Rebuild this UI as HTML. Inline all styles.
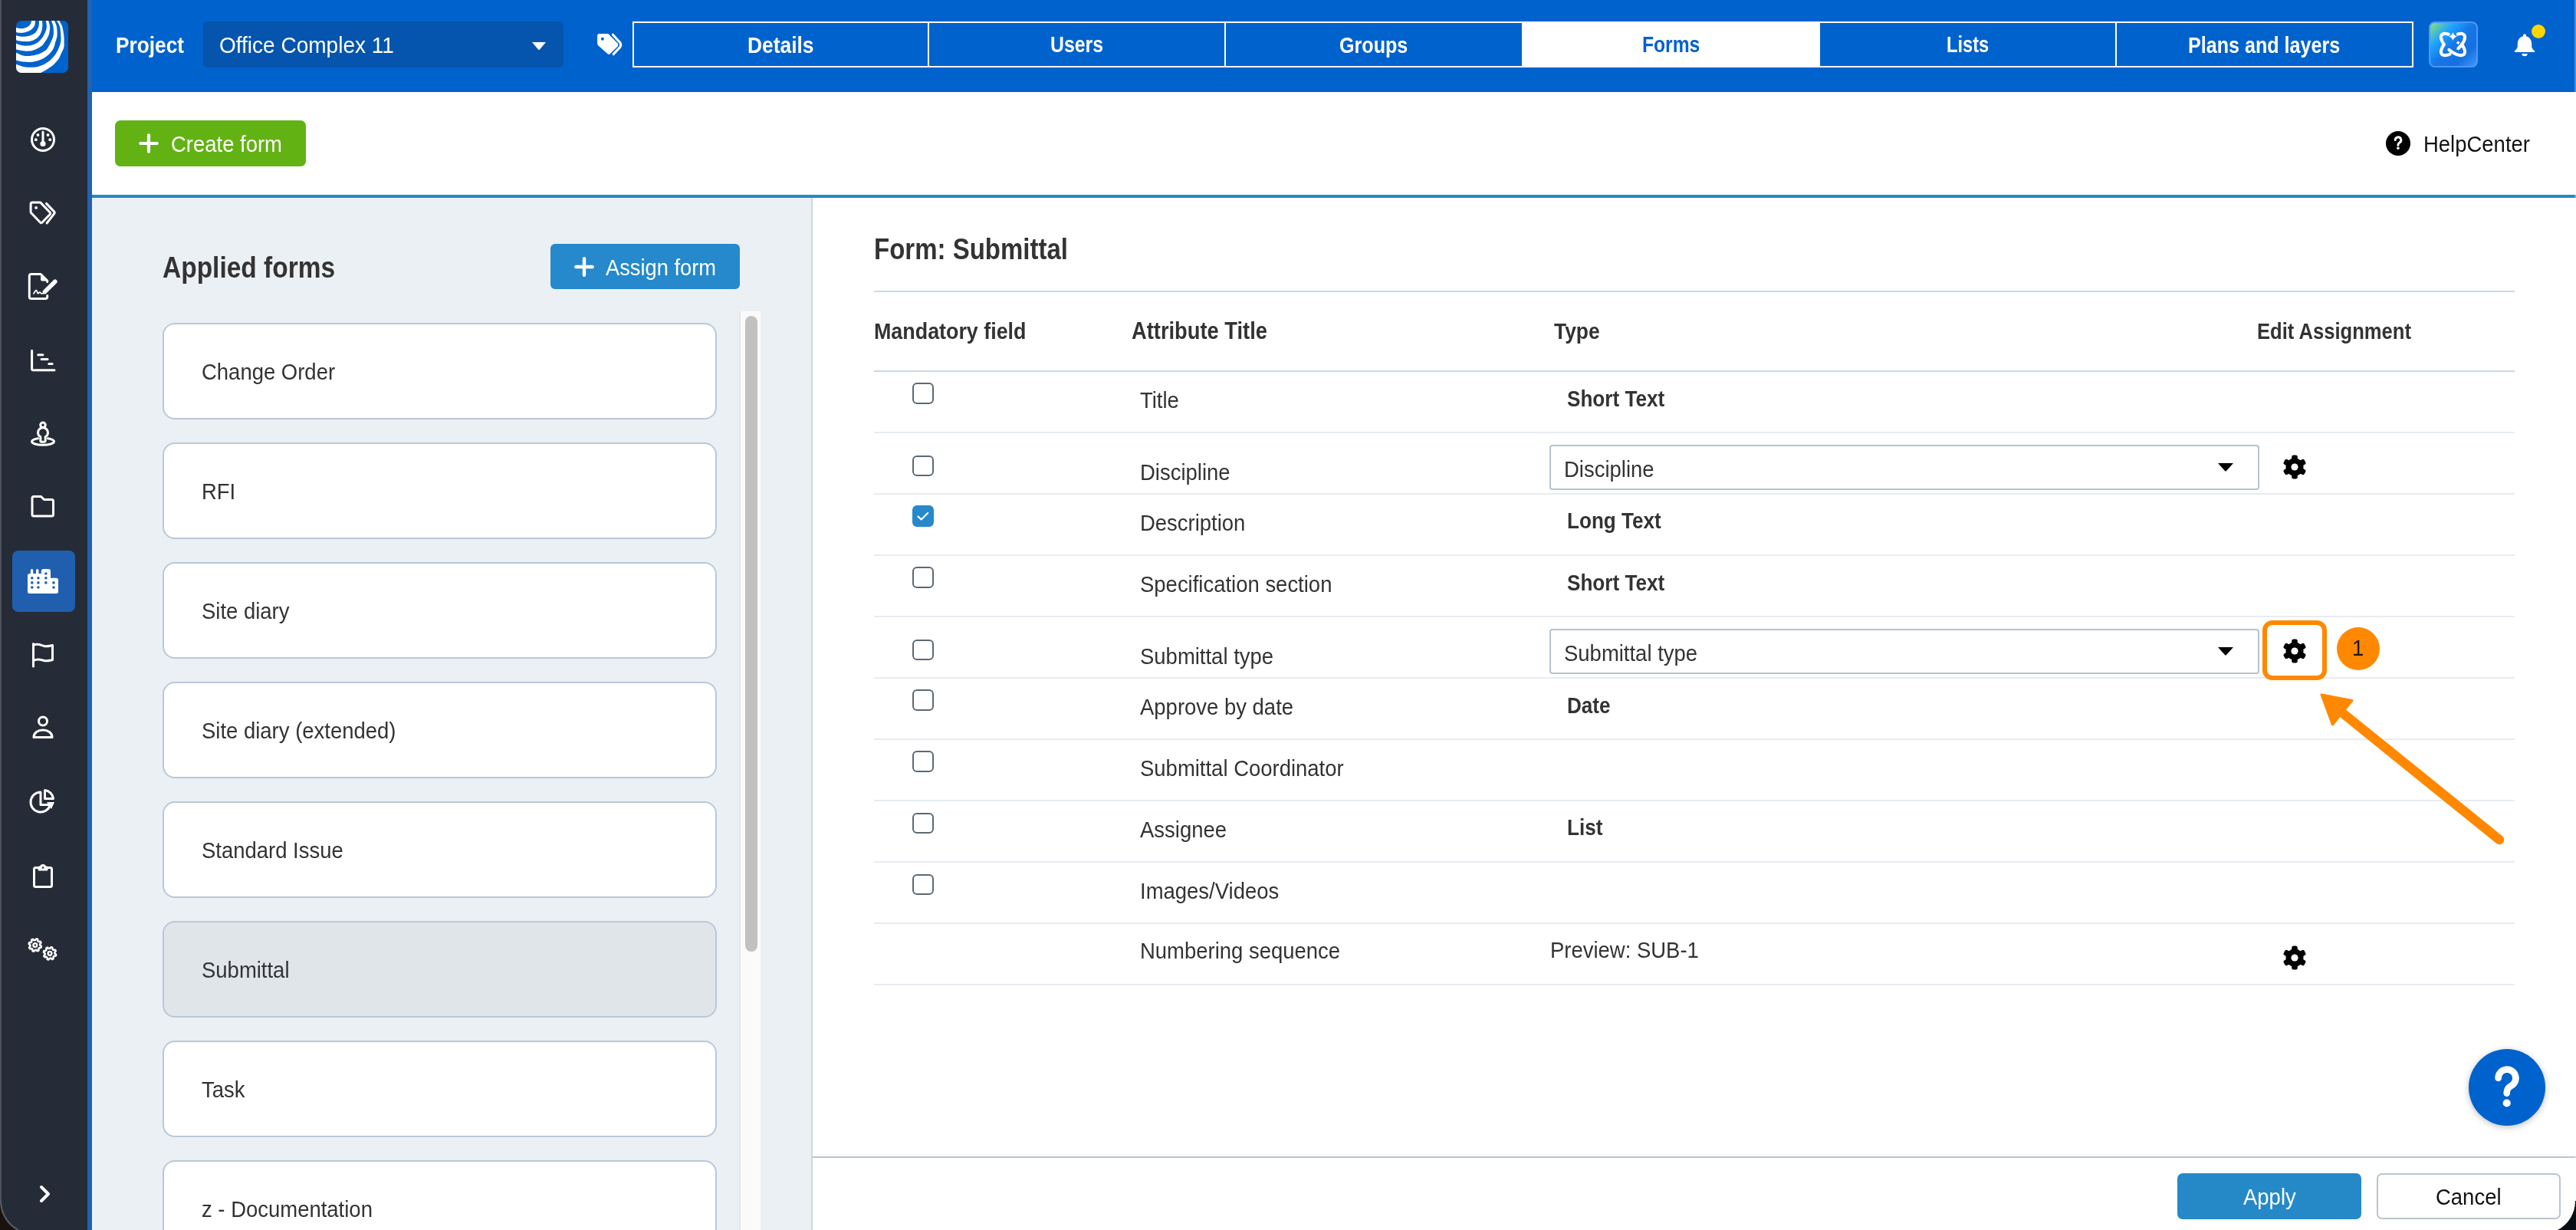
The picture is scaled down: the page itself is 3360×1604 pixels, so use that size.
<!DOCTYPE html>
<html><head><meta charset="utf-8">
<style>
html,body{margin:0;padding:0;}
body{width:3360px;height:1604px;overflow:hidden;position:relative;background:#fff;font-family:"Liberation Sans",sans-serif;}
.t{position:absolute;white-space:nowrap;line-height:1;will-change:transform;}
.b{position:absolute;box-sizing:border-box;}
svg{position:absolute;overflow:visible;}
</style></head><body>
<div class="b" style="left:0px;top:0px;width:114px;height:1604px;background:#262c37"></div>
<div class="b" style="left:0px;top:0px;width:2px;height:1604px;background:#4d525c"></div>
<div class="b" style="left:114px;top:0px;width:6px;height:1604px;background:#2262b0"></div>
<svg style="left:21px;top:27px" width="68" height="68" viewBox="0 0 68 68"><defs><clipPath id="lc"><rect width="68" height="68" rx="7"/></clipPath></defs><g clip-path="url(#lc)"><rect width="68" height="68" fill="#0062cc"/><g fill="#fff"><path d="M24.8 -1 L24.8 0 C24.8 0.8 24.9 3.4 24.5 4.9 C24.1 6.4 23.3 7.8 22.4 9.0 C21.5 10.2 20.3 11.3 18.9 12.2 C17.5 13.1 15.9 13.9 14.2 14.5 C12.5 15.1 10.5 15.6 8.7 15.8 C6.9 16.0 4.8 15.8 3.4 15.7 C1.9 15.6 0.6 15.1 0.0 15.0 L-1 9.1 L0 9.1 C0.4 9.2 1.4 9.6 2.5 9.8 C3.5 10.0 4.9 10.3 6.3 10.3 C7.7 10.3 9.3 10.2 10.7 9.8 C12.1 9.4 13.6 8.8 14.8 8.1 C16.0 7.4 16.9 6.6 17.7 5.7 C18.5 4.8 19.1 3.5 19.5 2.5 C19.9 1.5 19.8 0.4 19.9 0.0 L19.9 -1 Z"/>
<path d="M34.1 -1 L34.1 0 C34.1 1.5 34.5 6.3 34.1 9.2 C33.7 12.0 33.0 14.8 31.8 17.1 C30.6 19.4 28.9 21.4 26.8 23.0 C24.8 24.6 22.1 25.8 19.5 26.5 C16.9 27.2 14.0 27.2 11.3 27.1 C8.6 27.1 5.3 26.5 3.4 26.2 C1.5 25.9 0.6 25.4 0.0 25.3 L-1 19.2 L0 19.2 C0.8 19.4 3.0 20.1 4.9 20.4 C6.8 20.7 9.1 20.9 11.3 20.8 C13.5 20.7 15.9 20.2 18.0 19.5 C20.1 18.8 22.3 17.9 23.9 16.6 C25.5 15.3 26.7 13.6 27.7 11.9 C28.7 10.2 29.3 8.3 29.7 6.3 C30.1 4.3 29.9 1.1 29.9 0.0 L29.9 -1 Z"/>
<path d="M42.1 -1 L42.1 0 C42.4 1.3 43.9 5.0 44.1 7.8 C44.3 10.6 43.7 14.2 43.2 16.6 C42.7 19.0 41.9 20.4 40.9 22.4 C39.9 24.3 38.3 26.6 37.1 28.3 C35.9 30.0 35.5 31.3 33.5 32.8 C31.5 34.3 28.1 36.3 25.3 37.4 C22.5 38.5 19.5 39.3 16.6 39.6 C13.7 39.9 10.6 39.5 7.8 39.1 C5.0 38.7 1.3 37.7 0.0 37.4 L-1 29.7 L0 29.7 C0.8 30.0 2.9 31.0 4.9 31.5 C6.9 32.0 9.5 32.7 12.2 32.7 C14.9 32.8 18.3 32.5 21.0 31.8 C23.7 31.1 26.2 29.8 28.3 28.3 C30.4 26.8 32.2 24.5 33.5 23.0 C34.8 21.5 35.0 21.1 35.9 19.5 C36.8 17.9 37.9 15.5 38.6 13.6 C39.3 11.7 39.9 10.1 39.9 7.8 C39.9 5.5 39.1 1.3 38.9 0.0 L38.9 -1 Z"/>
<path d="M50 -1 L50 0 C50.5 1.3 52.3 4.5 52.9 7.8 C53.5 11.1 53.8 16.1 53.5 19.5 C53.2 22.9 51.8 25.9 51.1 28.3 C50.5 30.7 50.3 32.2 49.6 34.0 C48.9 35.8 48.3 37.1 47.0 38.9 C45.7 40.7 43.6 43.0 41.8 44.7 C39.9 46.4 38.1 47.8 35.9 49.1 C33.6 50.4 31.0 51.5 28.3 52.3 C25.6 53.1 22.7 53.7 19.5 53.9 C16.3 54.1 12.4 53.9 9.2 53.5 C5.9 53.1 1.5 51.8 0.0 51.4 L-1 41.8 L0 41.8 C1.5 42.4 6.2 44.9 9.2 45.6 C12.2 46.3 14.8 46.1 18.0 45.9 C21.2 45.6 25.4 45.0 28.3 44.1 C31.2 43.2 33.6 41.6 35.5 40.5 C37.4 39.4 38.4 38.9 39.7 37.4 C41.0 35.9 42.4 33.5 43.5 31.5 C44.6 29.5 45.6 27.6 46.5 25.3 C47.4 23.1 48.5 20.9 48.8 18.0 C49.1 15.1 49.0 10.8 48.5 7.8 C48.0 4.8 46.4 1.3 46.0 0.0 L46 -1 Z"/>
<path d="M56.1 -1 L56.1 0 C56.8 1.3 59.2 4.5 60.2 7.8 C61.2 11.1 61.9 16.1 62.3 19.5 C62.7 22.9 62.6 25.7 62.6 28.3 C62.6 30.9 62.8 32.8 62.3 35.0 C61.8 37.2 60.5 39.2 59.3 41.8 C58.1 44.4 56.9 47.9 55.0 50.6 C53.1 53.3 50.8 55.7 48.2 57.9 C45.7 60.1 42.2 62.1 39.7 63.7 C37.2 65.3 34.3 66.7 33.0 67.5 C31.7 68.3 32.2 68.3 32.0 68.5 L0 69 L-1 56.7 L0 56.7 C1.8 57.3 7.4 59.5 10.7 60.2 C13.9 60.9 16.6 60.8 19.5 60.8 C22.4 60.8 25.3 60.6 28.3 59.9 C31.3 59.2 34.5 57.9 37.4 56.4 C40.3 54.9 43.1 53.0 45.6 50.6 C48.1 48.2 50.7 45.0 52.6 41.8 C54.5 38.6 56.3 34.4 57.3 31.2 C58.3 28.0 58.5 26.3 58.5 22.4 C58.5 18.5 57.9 11.5 57.0 7.8 C56.1 4.1 53.8 1.3 53.2 0.0 L53.2 -1 Z"/></g></g></svg>
<div class="b" style="left:16px;top:718px;width:82px;height:80px;background:#1f5fae;border-radius:8px"></div>
<svg style="left:36px;top:162px" width="40" height="40" viewBox="0 0 40 40"><circle cx="20" cy="20" r="14.5" fill="none" stroke="#fff" stroke-width="3" stroke-linecap="round" stroke-linejoin="round"/><line x1="20" y1="10" x2="20" y2="24" fill="none" stroke="#fff" stroke-width="3" stroke-linecap="round" stroke-linejoin="round"/><circle cx="20" cy="25.5" r="3.6" fill="#fff"/><circle cx="13.5" cy="14" r="1.9" fill="#fff"/><circle cx="26.5" cy="14" r="1.9" fill="#fff"/><circle cx="10.8" cy="20.2" r="1.9" fill="#fff"/><circle cx="29.2" cy="20.2" r="1.9" fill="#fff"/></svg>
<svg style="left:36px;top:258px" width="40" height="40" viewBox="0 0 40 40"><path d="M4.1 8 a2.1 2.1 0 0 1 2.1-2.1 h10.4 l12.8 13.3 a1.5 1.5 0 0 1 0 2 l-10.6 11 a1.5 1.5 0 0 1 -2.1 0 l-12-12.4 a1.8 1.8 0 0 1 -.6-1.3z" fill="none" stroke="#fff" stroke-width="3" stroke-linecap="round" stroke-linejoin="round"/><circle cx="11.1" cy="12.9" r="1.9" fill="#fff"/><path d="M24.5 7.4 l10 10.5 a2.2 2.2 0 0 1 0 3 l-9.4 12.1" fill="none" stroke="#fff" stroke-width="3" stroke-linecap="round" stroke-linejoin="round"/></svg>
<svg style="left:36px;top:354px" width="40" height="40" viewBox="0 0 40 40"><path d="M25.7 13.5 v-1.5 l-8.5-8.5 h-12.4 a2.5 2.5 0 0 0 -2.5 2.5 v27 a2.5 2.5 0 0 0 2.5 2.5 h18.4 a2.5 2.5 0 0 0 2.5-2.5 v-1.5" fill="none" stroke="#fff" stroke-width="3" stroke-linecap="round" stroke-linejoin="round"/><path d="M17 3.5 v7 a2 2 0 0 0 2 2 h7z" fill="#fff"/><path d="M8 28.8 c1.5-2 2.5-5.5 3.8-3.5 c1 1.7 1.2 4.3 2.6 2.8 c1-1 1.8-1.6 3 .2 c.8 1.1 2 .5 3.5 0" fill="none" stroke="#fff" stroke-width="1.8" stroke-linecap="round" stroke-linejoin="round"/><path d="M22.5 26.5 L35.8 13.2" stroke="#fff" stroke-width="5.6" stroke-linecap="round"/><path d="M19.8 29.6 l1.2-4.2 l3 3z" fill="#fff"/></svg>
<svg style="left:36px;top:450px" width="40" height="40" viewBox="0 0 40 40"><path d="M5.6 7.2 v23.6 a2 2 0 0 0 2 2 h27.4" fill="none" stroke="#fff" stroke-width="3" stroke-linecap="round" stroke-linejoin="round"/><line x1="13.8" y1="12.7" x2="19.9" y2="12.7" fill="none" stroke="#fff" stroke-width="3" stroke-linecap="round" stroke-linejoin="round"/><line x1="18.1" y1="18.4" x2="26" y2="18.4" fill="none" stroke="#fff" stroke-width="3" stroke-linecap="round" stroke-linejoin="round"/><line x1="27.8" y1="24.5" x2="32.1" y2="24.5" fill="none" stroke="#fff" stroke-width="3" stroke-linecap="round" stroke-linejoin="round"/></svg>
<svg style="left:36px;top:546px" width="40" height="40" viewBox="0 0 40 40"><circle cx="20" cy="8.3" r="3.3" fill="none" stroke="#fff" stroke-width="3" stroke-linecap="round" stroke-linejoin="round"/><path d="M16.8 29 v-5.5 a6 6 0 0 1 -3.3-5.3 a6.5 6.5 0 0 1 13 0 a6 6 0 0 1 -3.3 5.3 v5.5 a1.3 1.3 0 0 1 -1.3 1.3 h-3.8 a1.3 1.3 0 0 1 -1.3-1.3z" fill="none" stroke="#fff" stroke-width="3" stroke-linecap="round" stroke-linejoin="round"/><path d="M13.5 25.8 c-5 .9-8 2.2-8 4 c0 2.6 6.5 4.5 14.5 4.5 s14.5-1.9 14.5-4.5 c0-1.8-3-3.1-8-4" fill="none" stroke="#fff" stroke-width="3" stroke-linecap="round" stroke-linejoin="round"/></svg>
<svg style="left:36px;top:641px" width="40" height="40" viewBox="0 0 40 40"><path d="M6 8.5 a2 2 0 0 1 2-2 h9.5 l4 4 h10 a2 2 0 0 1 2 2 v17.5 a2 2 0 0 1 -2 2 h-23.5 a2 2 0 0 1 -2-2z" fill="none" stroke="#fff" stroke-width="3" stroke-linecap="round" stroke-linejoin="round"/></svg>
<svg style="left:36px;top:738px" width="40" height="40" viewBox="0 0 40 40"><path d="M0 33.5 v-21 a2.5 2.5 0 0 1 2.5-2.5 h1.3 v-4.3 a1.7 1.7 0 0 1 3.4 0 v4.3 h3.8 v-4.3 a1.7 1.7 0 0 1 3.4 0 v4.3 h3.4 v-3 a3 3 0 0 1 3-3 h6.2 a3 3 0 0 1 3 3 v8.8 h7.5 a2.5 2.5 0 0 1 2.5 2.5 v15.2 a2.5 2.5 0 0 1 -2.5 2.5 h-35 a2.5 2.5 0 0 1 -2.5-2.5z" fill="#fff"/><g fill="#1f5fae"><circle cx="5.8" cy="15.8" r="1.8"/><circle cx="5.8" cy="21.9" r="1.8"/><circle cx="5.8" cy="28" r="1.8"/><circle cx="13.9" cy="15.8" r="1.8"/><circle cx="13.9" cy="21.9" r="1.8"/><circle cx="13.9" cy="28" r="1.8"/><circle cx="23.9" cy="10" r="1.8"/><circle cx="23.9" cy="15.8" r="1.8"/><circle cx="23.9" cy="21.9" r="1.8"/><circle cx="34" cy="21.9" r="1.8"/><circle cx="34" cy="28" r="1.8"/></g></svg>
<svg style="left:36px;top:834px" width="40" height="40" viewBox="0 0 40 40"><line x1="7.5" y1="5.5" x2="7.5" y2="35" fill="none" stroke="#fff" stroke-width="3" stroke-linecap="round" stroke-linejoin="round"/><path d="M7.5 7.5 c6-3 10 0 14 1 s8-.5 11-1 v19 c-3 .5-7 2-11 1 s-8-3-14 0" fill="none" stroke="#fff" stroke-width="3" stroke-linecap="round" stroke-linejoin="round"/></svg>
<svg style="left:36px;top:930px" width="40" height="40" viewBox="0 0 40 40"><circle cx="20" cy="10.5" r="5.5" fill="none" stroke="#fff" stroke-width="3" stroke-linecap="round" stroke-linejoin="round"/><path d="M8 31.5 c0-6 5.5-9.5 12-9.5 s12 3.5 12 9.5z" fill="none" stroke="#fff" stroke-width="3" stroke-linecap="round" stroke-linejoin="round"/></svg>
<svg style="left:36px;top:1025px" width="40" height="40" viewBox="0 0 40 40"><path d="M17 8 a13 13 0 1 0 12.5 16.5 h-12.5z" fill="none" stroke="#fff" stroke-width="3" stroke-linecap="round" stroke-linejoin="round"/><path d="M22.5 5.5 a12.5 12.5 0 0 1 11 11 h-11z" fill="none" stroke="#fff" stroke-width="3" stroke-linecap="round" stroke-linejoin="round"/><path d="M25 21 h10 l-4 9z" fill="#fff"/></svg>
<svg style="left:36px;top:1123px" width="40" height="40" viewBox="0 0 40 40"><path d="M15 8.5 h-4.5 a2 2 0 0 0 -2 2 v21 a2 2 0 0 0 2 2 h19 a2 2 0 0 0 2-2 v-21 a2 2 0 0 0 -2-2 h-4.5" fill="none" stroke="#fff" stroke-width="3" stroke-linecap="round" stroke-linejoin="round"/><path d="M15 11 v-3 h2.5 a2.5 2.5 0 0 1 5 0 h2.5 v3z" fill="none" stroke="#fff" stroke-width="3" stroke-linejoin="round"/></svg>
<svg style="left:36px;top:1218px" width="40" height="40" viewBox="0 0 40 40"><path d="M17.93 16.15 L17.46 17.70 L15.17 18.12 L14.36 19.09 L14.39 21.42 L12.95 22.18 L11.04 20.85 L9.78 20.97 L8.15 22.63 L6.60 22.16 L6.18 19.87 L5.21 19.06 L2.88 19.09 L2.12 17.65 L3.45 15.74 L3.33 14.48 L1.67 12.85 L2.14 11.30 L4.43 10.88 L5.24 9.91 L5.21 7.58 L6.65 6.82 L8.56 8.15 L9.82 8.03 L11.45 6.37 L13.00 6.84 L13.42 9.13 L14.39 9.94 L16.72 9.91 L17.48 11.35 L16.15 13.26 L16.27 14.52Z" fill="none" stroke="#fff" stroke-width="2.6" stroke-linejoin="round"/><circle cx="9.8" cy="14.5" r="2.4" fill="none" stroke="#fff" stroke-width="2.4"/><path d="M37.13 26.95 L36.66 28.50 L34.37 28.92 L33.56 29.89 L33.59 32.22 L32.15 32.98 L30.24 31.65 L28.98 31.77 L27.35 33.43 L25.80 32.96 L25.38 30.67 L24.41 29.86 L22.08 29.89 L21.32 28.45 L22.65 26.54 L22.53 25.28 L20.87 23.65 L21.34 22.10 L23.63 21.68 L24.44 20.71 L24.41 18.38 L25.85 17.62 L27.76 18.95 L29.02 18.83 L30.65 17.17 L32.20 17.64 L32.62 19.93 L33.59 20.74 L35.92 20.71 L36.68 22.15 L35.35 24.06 L35.47 25.32Z" fill="none" stroke="#fff" stroke-width="2.6" stroke-linejoin="round"/><circle cx="29" cy="25.3" r="2.4" fill="none" stroke="#fff" stroke-width="2.4"/></svg>
<svg style="left:39px;top:1537px" width="40" height="40" viewBox="0 0 40 40"><path d="M15 11 l9 9 l-9 9" fill="none" stroke="#fff" stroke-width="4" stroke-linecap="round" stroke-linejoin="round"/></svg>
<div class="b" style="left:120px;top:0px;width:3240px;height:120px;background:#0062cc"></div>
<div class="t" style="left:151.00px;top:47.07px;font-size:26.25px;font-weight:700;color:#fff;transform:scaleY(1.1349);transform-origin:0 22.23px;">Project</div>
<div class="b" style="left:265px;top:28px;width:470px;height:60px;background:#0555ae;border-radius:5px"></div>
<div class="t" style="left:285.60px;top:45.87px;font-size:28.03px;font-weight:400;color:#fff;transform:scaleY(1.0476);transform-origin:0 23.73px;">Office Complex 11</div>
<svg style="left:692px;top:53px" width="22" height="15" viewBox="0 0 22 15"><path d="M2 2 h18 l-8 9.5 a1.3 1.3 0 0 1 -2 0z" fill="#fff"/></svg>
<svg style="left:776px;top:40px" width="38" height="36" viewBox="0 0 38 36"><path d="M3.1 6.6 Q3.1 4 5.7 4 H17.3 L29.6 16.6 Q31.2 18.6 29.6 20.4 L20 30 Q18.3 31.6 16.6 30.2 L4.4 19.4 Q3.1 18.2 3.1 16.6z" fill="#fff"/><circle cx="9.9" cy="10.8" r="2" fill="#0062cc"/><path d="M23.4 5.2 L32.8 15.6 Q34.6 18.6 32.8 21.4 L24.2 30.6" fill="none" stroke="#fff" stroke-width="3.1" stroke-linecap="round" stroke-linejoin="round"/></svg>
<div class="b" style="left:825px;top:28px;width:2323px;height:60px;border:2px solid #fff"></div>
<div class="b" style="left:1985px;top:28px;width:389px;height:60px;background:#fff"></div>
<div class="b" style="left:1210px;top:28px;width:2px;height:60px;background:#fff"></div>
<div class="b" style="left:1597px;top:28px;width:2px;height:60px;background:#fff"></div>
<div class="b" style="left:2759px;top:28px;width:2px;height:60px;background:#fff"></div>
<div class="t" style="left:975.10px;top:46.95px;font-size:26.40px;font-weight:700;color:#fff;transform:scaleY(1.1286);transform-origin:0 22.35px;">Details</div>
<div class="t" style="left:1370.00px;top:48.29px;font-size:24.82px;font-weight:700;color:#fff;transform:scaleY(1.2005);transform-origin:0 21.01px;">Users</div>
<div class="t" style="left:1747.25px;top:48.03px;font-size:25.12px;font-weight:700;color:#fff;transform:scaleY(1.1862);transform-origin:0 21.27px;">Groups</div>
<div class="t" style="left:2141.65px;top:48.43px;font-size:24.65px;font-weight:700;color:#0062cc;transform:scaleY(1.2089);transform-origin:0 20.87px;">Forms</div>
<div class="t" style="left:2538.90px;top:49.29px;font-size:23.64px;font-weight:700;color:#fff;transform:scaleY(1.2604);transform-origin:0 20.01px;">Lists</div>
<div class="t" style="left:2854.35px;top:48.04px;font-size:25.12px;font-weight:700;color:#fff;transform:scaleY(1.1863);transform-origin:0 21.26px;">Plans and layers</div>
<div class="b" style="left:3168px;top:28px;width:64px;height:60px;border-radius:8px;border:2px solid #4c96ff;background:linear-gradient(135deg,#8ee27a 0%,#1ea4ff 28%,#1677e6 50%,#1570e0 75%,#3d98ff 100%)"></div>
<svg style="left:3176px;top:36px" width="48" height="44" viewBox="0 0 48 44"><path d="M11.95 22.00 L11.47 21.32 L11.01 20.64 L10.58 19.97 L10.18 19.30 L9.82 18.64 L9.48 17.98 L9.18 17.34 L8.91 16.70 L8.67 16.08 L8.46 15.47 L8.30 14.88 L8.16 14.30 L8.06 13.74 L8.00 13.20 L7.97 12.68 L7.98 12.18 L8.03 11.70 L8.11 11.25 L8.22 10.82 L8.37 10.42 L8.56 10.04 L8.78 9.70 L9.03 9.38 L9.32 9.09 L9.64 8.82 L9.99 8.59 L10.38 8.39 L10.79 8.23 L11.23 8.09 L11.70 7.98 L12.20 7.91 L12.72 7.87 L13.27 7.87 L13.84 7.89 L14.44 7.95 L15.05 8.04 L15.69 8.16 L16.34 8.32 L17.01 8.50 L17.70 8.72 M35.05 22.00 L35.71 22.93 L36.31 23.86 L36.86 24.78 L37.35 25.69 L37.78 26.58 L38.15 27.45 L38.46 28.29 L38.70 29.11 L38.88 29.90 L38.98 30.66 L39.03 31.37 L39.00 32.05 L38.91 32.68 L38.75 33.27 L38.52 33.81 L38.23 34.29 L37.87 34.73 L37.46 35.10 L36.98 35.42 L36.44 35.69 L35.85 35.89 L35.20 36.03 L34.50 36.11 L33.76 36.13 L32.97 36.09 L32.14 35.99 L31.27 35.83 L30.37 35.61 L29.44 35.33 L28.48 34.99 L27.50 34.59 L26.50 34.14 L25.49 33.64 L24.48 33.08 L23.45 32.48 L22.43 31.84 L21.41 31.15 L20.40 30.42 L19.41 29.65 L18.43 28.85 M29.80 8.56 L30.60 8.33 L31.37 8.15 L32.12 8.01 L32.83 7.92 L33.52 7.87 L34.18 7.87 L34.80 7.91 L35.39 8.00 L35.93 8.14 L36.44 8.31 L36.91 8.54 L37.33 8.80 L37.71 9.11 L38.04 9.46 L38.32 9.85 L38.56 10.28 L38.75 10.75 L38.89 11.25 L38.98 11.79 L39.02 12.36 L39.01 12.96 L38.96 13.59 L38.85 14.25 L38.69 14.93 L38.48 15.64 L38.23 16.36 L37.93 17.10 L37.58 17.86 L37.18 18.64 L36.75 19.42 L36.26 20.21 L35.74 21.01 L35.18 21.81 L34.58 22.61 L33.95 23.41 L33.28 24.21 L32.58 25.00 L31.85 25.77 L31.10 26.54 L30.32 27.29 M19.49 34.59 L18.73 34.91 L17.99 35.18 L17.25 35.43 L16.54 35.63 L15.84 35.81 L15.16 35.94 L14.50 36.04 L13.87 36.11 L13.26 36.13 L12.68 36.12 L12.12 36.08 L11.60 36.00 L11.10 35.88 L10.64 35.72 L10.22 35.53 L9.82 35.30 L9.47 35.04 L9.14 34.74 L8.86 34.42 L8.62 34.05 L8.41 33.66 L8.24 33.24 L8.12 32.79 L8.03 32.31 L7.98 31.80 L7.98 31.27 L8.01 30.71 L8.08 30.13 L8.20 29.53 L8.35 28.91 L8.55 28.27 L8.78 27.62 L9.05 26.95 L9.36 26.27 L9.71 25.57 L10.09 24.87 L10.50 24.16 L10.96 23.44 L11.44 22.72 L11.95 22.00" fill="none" stroke="#fff" stroke-width="4.1" stroke-linecap="round"/><path d="M23.5 6 Q24.6 10.4 29 11.5 Q24.6 12.6 23.5 17 Q22.4 12.6 18 11.5 Q22.4 10.4 23.5 6Z" fill="#fff"/><path d="M30.2 17 Q30.7 19.3 33 19.8 Q30.7 20.3 30.2 22.6 Q29.7 20.3 27.4 19.8 Q29.7 19.3 30.2 17Z" fill="#fff"/></svg>
<svg style="left:3276px;top:40px" width="34" height="38" viewBox="0 0 34 38"><path d="M17 4.3 a2 2 0 0 1 2 2 v.9 c4.6 1.2 7.2 5 7.2 10 v2.7 c0 2.6 1.6 4.6 3.6 6.2 a1.1 1.1 0 0 1 -.7 2 h-24.2 a1.1 1.1 0 0 1 -.7-2 c2-1.6 3.6-3.6 3.6-6.2 v-2.7 c0-5 2.6-8.8 7.2-10 v-.9 a2 2 0 0 1 2-2z" fill="#fff"/><path d="M13.3 30 h7.4 a3.7 3.2 0 0 1 -7.4 0z" fill="#fff"/></svg>
<div class="b" style="left:3302px;top:32px;width:18px;height:18px;background:#ffd600;border-radius:50%"></div>
<div class="b" style="left:150px;top:157px;width:249px;height:60px;background:#62b214;border-radius:7px"></div>
<svg style="left:177.8px;top:171px" width="32" height="32" viewBox="0 0 32 32"><path d="M16 5.3 v21.4 M5.3 16 h21.4" stroke="#fff" stroke-width="4.2" stroke-linecap="round"/></svg>
<div class="t" style="left:223.00px;top:174.75px;font-size:27.46px;font-weight:400;color:#fff;transform:scaleY(1.0691);transform-origin:0 23.25px;">Create form</div>
<div class="b" style="left:3112px;top:171px;width:32px;height:32px;background:#000;border-radius:50%"></div>
<svg style="left:3122px;top:178px" width="12" height="18" viewBox="0 0 12 18"><path d="M2.2 4.6 a3.8 3.8 0 1 1 5.6 3.4 c-1.4 .8-1.9 1.5-1.9 3.2" fill="none" stroke="#fff" stroke-width="3" stroke-linecap="round"/><circle cx="5.9" cy="15.2" r="1.8" fill="#fff"/></svg>
<div class="t" style="left:3160.80px;top:174.54px;font-size:27.47px;font-weight:400;color:#111;transform:scaleY(1.0688);transform-origin:0 23.26px;">HelpCenter</div>
<div class="b" style="left:120px;top:254px;width:3240px;height:4px;background:#2389c9"></div>
<div class="b" style="left:120px;top:258px;width:938px;height:1346px;background:#ebf0f4"></div>
<div class="b" style="left:1058px;top:258px;width:2px;height:1346px;background:#cad6e2"></div>
<div class="t" style="left:212.40px;top:333.85px;font-size:33.49px;font-weight:700;color:#333;transform:scaleY(1.1459);transform-origin:0 28.35px;">Applied forms</div>
<div class="b" style="left:718px;top:318px;width:247px;height:59px;background:#2589cb;border-radius:6px"></div>
<svg style="left:745.9px;top:332.1px" width="32" height="32" viewBox="0 0 32 32"><path d="M16 5.3 v21.4 M5.3 16 h21.4" stroke="#fff" stroke-width="4.4" stroke-linecap="round"/></svg>
<div class="t" style="left:790.20px;top:335.89px;font-size:27.29px;font-weight:400;color:#fff;transform:scaleY(1.0758);transform-origin:0 23.11px;">Assign form</div>
<div class="b" style="left:212px;top:421px;width:723px;height:126px;background:#fff;border:2px solid #b9c8d7;border-radius:16px"></div>
<div class="t" style="left:262.50px;top:472.24px;font-size:27.47px;font-weight:400;color:#333;transform:scaleY(1.0847);transform-origin:0 23.26px;">Change Order</div>
<div class="b" style="left:212px;top:577px;width:723px;height:126px;background:#fff;border:2px solid #b9c8d7;border-radius:16px"></div>
<div class="t" style="left:262.50px;top:628.24px;font-size:27.47px;font-weight:400;color:#333;transform:scaleY(1.0847);transform-origin:0 23.26px;">RFI</div>
<div class="b" style="left:212px;top:733px;width:723px;height:126px;background:#fff;border:2px solid #b9c8d7;border-radius:16px"></div>
<div class="t" style="left:262.50px;top:784.24px;font-size:27.47px;font-weight:400;color:#333;transform:scaleY(1.0847);transform-origin:0 23.26px;">Site diary</div>
<div class="b" style="left:212px;top:889px;width:723px;height:126px;background:#fff;border:2px solid #b9c8d7;border-radius:16px"></div>
<div class="t" style="left:262.50px;top:940.24px;font-size:27.47px;font-weight:400;color:#333;transform:scaleY(1.0847);transform-origin:0 23.26px;">Site diary (extended)</div>
<div class="b" style="left:212px;top:1045px;width:723px;height:126px;background:#fff;border:2px solid #b9c8d7;border-radius:16px"></div>
<div class="t" style="left:262.50px;top:1096.24px;font-size:27.47px;font-weight:400;color:#333;transform:scaleY(1.0847);transform-origin:0 23.26px;">Standard Issue</div>
<div class="b" style="left:212px;top:1201px;width:723px;height:126px;background:#e0e5ea;border:2px solid #b9c8d7;border-radius:16px"></div>
<div class="t" style="left:262.50px;top:1252.24px;font-size:27.47px;font-weight:400;color:#333;transform:scaleY(1.0847);transform-origin:0 23.26px;">Submittal</div>
<div class="b" style="left:212px;top:1357px;width:723px;height:126px;background:#fff;border:2px solid #b9c8d7;border-radius:16px"></div>
<div class="t" style="left:262.50px;top:1408.24px;font-size:27.47px;font-weight:400;color:#333;transform:scaleY(1.0847);transform-origin:0 23.26px;">Task</div>
<div class="b" style="left:212px;top:1513px;width:723px;height:126px;background:#fff;border:2px solid #b9c8d7;border-radius:16px"></div>
<div class="t" style="left:262.50px;top:1564.24px;font-size:27.47px;font-weight:400;color:#333;transform:scaleY(1.0847);transform-origin:0 23.26px;">z - Documentation</div>
<div class="b" style="left:964px;top:406px;width:29px;height:1198px;background:#fafafa;border-left:2px solid #e6e6e6;border-right:1px solid #eeeeee"></div>
<div class="b" style="left:972px;top:412px;width:16px;height:829px;background:#c1c1c1;border-radius:8px"></div>
<div class="t" style="left:1140.00px;top:310.36px;font-size:33.01px;font-weight:700;color:#333;transform:scaleY(1.1581);transform-origin:0 27.94px;">Form: Submittal</div>
<div class="b" style="left:1140px;top:379px;width:2140px;height:2px;background:#cbd8e3"></div>
<div class="t" style="left:1140.00px;top:419.65px;font-size:26.87px;font-weight:700;color:#333;transform:scaleY(1.1250);transform-origin:0 22.75px;">Mandatory field</div>
<div class="t" style="left:1476.10px;top:419.09px;font-size:27.30px;font-weight:700;color:#333;transform:scaleY(1.1181);transform-origin:0 23.11px;">Attribute Title</div>
<div class="t" style="left:2026.80px;top:420.05px;font-size:26.40px;font-weight:700;color:#333;transform:scaleY(1.1452);transform-origin:0 22.35px;">Type</div>
<div class="t" style="left:2943.70px;top:420.73px;font-size:25.60px;font-weight:700;color:#333;transform:scaleY(1.1809);transform-origin:0 21.67px;">Edit Assignment</div>
<div class="b" style="left:1140px;top:483px;width:2140px;height:2px;background:#cbd8e3"></div>
<div class="b" style="left:1140px;top:563px;width:2140px;height:2px;background:#e6ecf1"></div>
<div class="b" style="left:1140px;top:643px;width:2140px;height:2px;background:#e6ecf1"></div>
<div class="b" style="left:1140px;top:723px;width:2140px;height:2px;background:#e6ecf1"></div>
<div class="b" style="left:1140px;top:803px;width:2140px;height:2px;background:#e6ecf1"></div>
<div class="b" style="left:1140px;top:883px;width:2140px;height:2px;background:#e6ecf1"></div>
<div class="b" style="left:1140px;top:963px;width:2140px;height:2px;background:#e6ecf1"></div>
<div class="b" style="left:1140px;top:1043px;width:2140px;height:2px;background:#e6ecf1"></div>
<div class="b" style="left:1140px;top:1123px;width:2140px;height:2px;background:#e6ecf1"></div>
<div class="b" style="left:1140px;top:1203px;width:2140px;height:2px;background:#e6ecf1"></div>
<div class="b" style="left:1140px;top:1283px;width:2140px;height:2px;background:#e6ecf1"></div>
<div class="b" style="left:1190px;top:499px;width:27.5px;height:27.5px;border:2px solid #5d6874;border-radius:6px;background:#fff"></div>
<div class="t" style="left:1487.00px;top:508.74px;font-size:27.47px;font-weight:400;color:#333;transform:scaleY(1.0741);transform-origin:0 23.26px;">Title</div>
<div class="t" style="left:2043.70px;top:507.90px;font-size:26.10px;font-weight:700;color:#333;transform:scaleY(1.1249);transform-origin:0 22.10px;">Short Text</div>
<div class="b" style="left:1190px;top:593.5px;width:27.5px;height:27.5px;border:2px solid #5d6874;border-radius:6px;background:#fff"></div>
<div class="t" style="left:1487.00px;top:602.74px;font-size:27.47px;font-weight:400;color:#333;transform:scaleY(1.0741);transform-origin:0 23.26px;">Discipline</div>
<div class="b" style="left:2021px;top:580px;width:926px;height:59px;border:2px solid #b5c3d1;border-radius:4px;background:#fff"></div>
<div class="t" style="left:2040.30px;top:598.74px;font-size:27.47px;font-weight:400;color:#333;transform:scaleY(1.0741);transform-origin:0 23.26px;">Discipline</div>
<svg style="left:2891px;top:602px" width="24" height="16" viewBox="0 0 24 16"><path d="M2 2 h20 l-9 10 a1.3 1.3 0 0 1 -2 0z" fill="#000"/></svg>
<div class="b" style="left:1190px;top:659px;width:27.5px;height:27.5px;background:#2589cb;border-radius:6px"></div>
<svg style="left:1190px;top:659px" width="28" height="28" viewBox="0 0 28 28"><path d="M7.5 14.5 l4.2 4 l8.5-8.5" fill="none" stroke="#fff" stroke-width="2.2" stroke-linecap="round" stroke-linejoin="round"/></svg>
<div class="t" style="left:1487.00px;top:668.74px;font-size:27.47px;font-weight:400;color:#333;transform:scaleY(1.0741);transform-origin:0 23.26px;">Description</div>
<div class="t" style="left:2043.70px;top:667.30px;font-size:26.10px;font-weight:700;color:#333;transform:scaleY(1.1249);transform-origin:0 22.10px;">Long Text</div>
<div class="b" style="left:1190px;top:739px;width:27.5px;height:27.5px;border:2px solid #5d6874;border-radius:6px;background:#fff"></div>
<div class="t" style="left:1487.00px;top:748.74px;font-size:27.47px;font-weight:400;color:#333;transform:scaleY(1.0741);transform-origin:0 23.26px;">Specification section</div>
<div class="t" style="left:2043.70px;top:747.50px;font-size:26.10px;font-weight:700;color:#333;transform:scaleY(1.1249);transform-origin:0 22.10px;">Short Text</div>
<div class="b" style="left:1190px;top:833.5px;width:27.5px;height:27.5px;border:2px solid #5d6874;border-radius:6px;background:#fff"></div>
<div class="t" style="left:1487.00px;top:842.74px;font-size:27.47px;font-weight:400;color:#333;transform:scaleY(1.0741);transform-origin:0 23.26px;">Submittal type</div>
<div class="b" style="left:2021px;top:820px;width:926px;height:59px;border:2px solid #b5c3d1;border-radius:4px;background:#fff"></div>
<div class="t" style="left:2040.30px;top:838.74px;font-size:27.47px;font-weight:400;color:#333;transform:scaleY(1.0741);transform-origin:0 23.26px;">Submittal type</div>
<svg style="left:2891px;top:842px" width="24" height="16" viewBox="0 0 24 16"><path d="M2 2 h20 l-9 10 a1.3 1.3 0 0 1 -2 0z" fill="#000"/></svg>
<div class="b" style="left:1190px;top:899px;width:27.5px;height:27.5px;border:2px solid #5d6874;border-radius:6px;background:#fff"></div>
<div class="t" style="left:1487.00px;top:908.74px;font-size:27.47px;font-weight:400;color:#333;transform:scaleY(1.0741);transform-origin:0 23.26px;">Approve by date</div>
<div class="t" style="left:2043.70px;top:907.90px;font-size:26.10px;font-weight:700;color:#333;transform:scaleY(1.1249);transform-origin:0 22.10px;">Date</div>
<div class="b" style="left:1190px;top:979px;width:27.5px;height:27.5px;border:2px solid #5d6874;border-radius:6px;background:#fff"></div>
<div class="t" style="left:1487.00px;top:988.74px;font-size:27.47px;font-weight:400;color:#333;transform:scaleY(1.0741);transform-origin:0 23.26px;">Submittal Coordinator</div>
<div class="b" style="left:1190px;top:1059.5px;width:27.5px;height:27.5px;border:2px solid #5d6874;border-radius:6px;background:#fff"></div>
<div class="t" style="left:1487.00px;top:1068.74px;font-size:27.47px;font-weight:400;color:#333;transform:scaleY(1.0741);transform-origin:0 23.26px;">Assignee</div>
<div class="t" style="left:2043.70px;top:1067.10px;font-size:26.10px;font-weight:700;color:#333;transform:scaleY(1.1249);transform-origin:0 22.10px;">List</div>
<div class="b" style="left:1190px;top:1139.7px;width:27.5px;height:27.5px;border:2px solid #5d6874;border-radius:6px;background:#fff"></div>
<div class="t" style="left:1487.00px;top:1149.04px;font-size:27.47px;font-weight:400;color:#333;transform:scaleY(1.0741);transform-origin:0 23.26px;">Images/Videos</div>
<div class="t" style="left:1487.00px;top:1227.04px;font-size:27.47px;font-weight:400;color:#333;transform:scaleY(1.0741);transform-origin:0 23.26px;">Numbering sequence</div>
<div class="t" style="left:2022.20px;top:1226.34px;font-size:27.47px;font-weight:400;color:#333;transform:scaleY(1.0741);transform-origin:0 23.26px;">Preview: SUB-1</div>
<svg style="left:2977px;top:593px" width="32" height="32" viewBox="0 0 32 32"><g fill="#000"><circle cx="16" cy="16" r="11.5"/><rect x="12.2" y="0.5" width="7.6" height="8" rx="2.5" transform="rotate(0 16 16)"/><rect x="12.2" y="0.5" width="7.6" height="8" rx="2.5" transform="rotate(60 16 16)"/><rect x="12.2" y="0.5" width="7.6" height="8" rx="2.5" transform="rotate(120 16 16)"/><rect x="12.2" y="0.5" width="7.6" height="8" rx="2.5" transform="rotate(180 16 16)"/><rect x="12.2" y="0.5" width="7.6" height="8" rx="2.5" transform="rotate(240 16 16)"/><rect x="12.2" y="0.5" width="7.6" height="8" rx="2.5" transform="rotate(300 16 16)"/></g><circle cx="16" cy="16" r="4.6" fill="#fff"/></svg>
<svg style="left:2977px;top:833px" width="32" height="32" viewBox="0 0 32 32"><g fill="#000"><circle cx="16" cy="16" r="11.5"/><rect x="12.2" y="0.5" width="7.6" height="8" rx="2.5" transform="rotate(0 16 16)"/><rect x="12.2" y="0.5" width="7.6" height="8" rx="2.5" transform="rotate(60 16 16)"/><rect x="12.2" y="0.5" width="7.6" height="8" rx="2.5" transform="rotate(120 16 16)"/><rect x="12.2" y="0.5" width="7.6" height="8" rx="2.5" transform="rotate(180 16 16)"/><rect x="12.2" y="0.5" width="7.6" height="8" rx="2.5" transform="rotate(240 16 16)"/><rect x="12.2" y="0.5" width="7.6" height="8" rx="2.5" transform="rotate(300 16 16)"/></g><circle cx="16" cy="16" r="4.6" fill="#fff"/></svg>
<svg style="left:2977px;top:1233px" width="32" height="32" viewBox="0 0 32 32"><g fill="#000"><circle cx="16" cy="16" r="11.5"/><rect x="12.2" y="0.5" width="7.6" height="8" rx="2.5" transform="rotate(0 16 16)"/><rect x="12.2" y="0.5" width="7.6" height="8" rx="2.5" transform="rotate(60 16 16)"/><rect x="12.2" y="0.5" width="7.6" height="8" rx="2.5" transform="rotate(120 16 16)"/><rect x="12.2" y="0.5" width="7.6" height="8" rx="2.5" transform="rotate(180 16 16)"/><rect x="12.2" y="0.5" width="7.6" height="8" rx="2.5" transform="rotate(240 16 16)"/><rect x="12.2" y="0.5" width="7.6" height="8" rx="2.5" transform="rotate(300 16 16)"/></g><circle cx="16" cy="16" r="4.6" fill="#fff"/></svg>
<div class="b" style="left:2951px;top:809px;width:84px;height:78px;border:6px solid #ff8800;border-radius:13px"></div>
<div class="b" style="left:3048px;top:818px;width:56px;height:56px;background:#ff8800;border-radius:50%"></div>
<div class="t" style="left:3068.38px;top:832.24px;font-size:27.47px;font-weight:400;color:#1a1a1a;transform:scaleY(1.0847);transform-origin:0 23.26px;">1</div>
<svg style="left:0;top:0" width="3360" height="1604" viewBox="0 0 3360 1604"><path d="M3260 1095 L3057 931" stroke="#ff8800" stroke-width="12.5" stroke-linecap="round"/><path d="M3028 906 L3068 913.5 L3042.5 945z" fill="#ff8800" stroke="#ff8800" stroke-width="3" stroke-linejoin="round"/></svg>
<div class="b" style="left:3220px;top:1367.5px;width:100px;height:100.0px;background:#0062cc;border-radius:50%;box-shadow:0 2px 8px rgba(0,0,0,.25)"></div>
<svg style="left:3252px;top:1392px" width="36" height="54" viewBox="0 0 12 18"><path d="M2.2 4.6 a3.8 3.8 0 1 1 5.6 3.4 c-1.4 .8-1.9 1.5-1.9 3.2" fill="none" stroke="#fff" stroke-width="2.9" stroke-linecap="round"/><circle cx="5.9" cy="15.5" r="1.7" fill="#fff"/></svg>
<div class="b" style="left:1060px;top:1508px;width:2300px;height:2px;background:#b9c5d1"></div>
<div class="b" style="left:2840px;top:1530px;width:240px;height:60px;background:#2589c8;border-radius:7px"></div>
<div class="t" style="left:2925.66px;top:1547.84px;font-size:27.47px;font-weight:400;color:#fff;transform:scaleY(1.0424);transform-origin:0 23.26px;">Apply</div>
<div class="b" style="left:3100px;top:1530px;width:240px;height:60px;background:#fff;border:2px solid #b9c5d1;border-radius:7px"></div>
<div class="t" style="left:3177.22px;top:1547.84px;font-size:27.47px;font-weight:400;color:#111;transform:scaleY(1.0424);transform-origin:0 23.26px;">Cancel</div>
<div class="b" style="left:3358px;top:0px;width:2px;height:1604px;background:rgba(255,255,255,.28)"></div>
<svg style="left:0;top:0" width="3360" height="1604" viewBox="0 0 3360 1604"><path d="M0 1566 V1604 H23.9 A43 43 0 0 1 1 1566z" fill="#1a120c"/><path d="M23.9 1604 A43 43 0 0 1 1 1566" fill="none" stroke="#5a606a" stroke-width="2"/><path d="M3360 1566 V1604 H3336.1 A43 43 0 0 0 3359 1566z" fill="#0a0e14"/></svg>
</body></html>
